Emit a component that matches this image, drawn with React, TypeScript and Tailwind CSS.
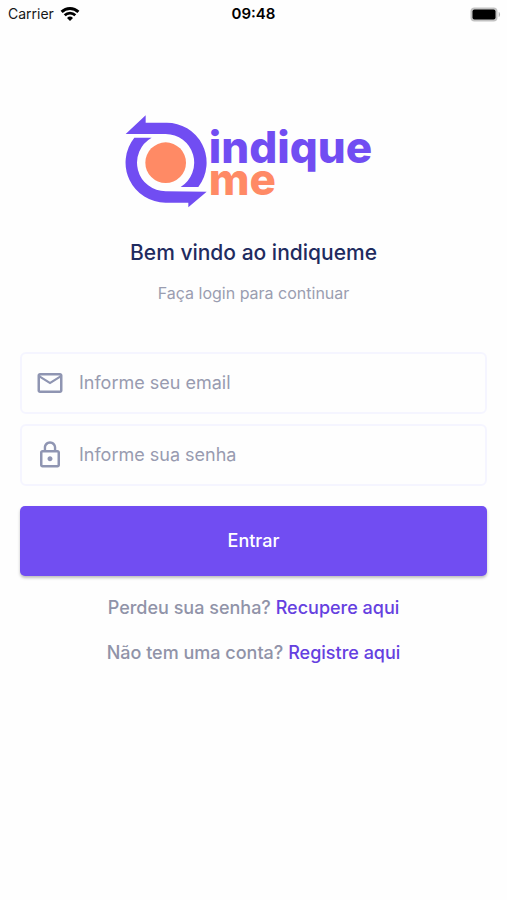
import React from 'react'
import type {IconType} from 'react-icons'
import {MdLockOutline, MdMailOutline} from 'react-icons/md'

interface FieldProps {
  id: string
  type: string
  label: string
  icon: IconType
}

function StatusBar() {
  return (
    <header className="grid h-7 grid-cols-3 items-center px-2 text-sm text-neutral-900">
      <div className="flex items-center gap-1.5">
        <span>Carrier</span>
        <svg viewBox="0 0 20 15" className="h-4 w-5" fill="none" stroke="#000">
          <path d="M1.6 5.4a12 12 0 0 1 16.8 0" strokeWidth="2.9" />
          <path d="M4.7 8.8a7.6 7.6 0 0 1 10.6 0" strokeWidth="2.7" />
          <path d="M10 14.6 7 11.5a4.4 4.4 0 0 1 6 0z" fill="#000" stroke="none" />
        </svg>
      </div>
      <span className="text-center text-[15px] font-semibold text-black">
        09:48
      </span>
      <svg viewBox="0 0 31 15" className="-mr-0.5 h-[15px] w-[31px] justify-self-end">
        <rect x="0.5" y="0.5" width="27" height="14" rx="4" fill="#c2c2c2" />
        <rect x="2.5" y="2.5" width="23" height="10" rx="2" fill="#000" />
        <path d="M28.7 5c1.8.6 1.8 4.4 0 5z" fill="#b5b5b5" />
      </svg>
    </header>
  )
}

function Logo() {
  return (
    <div className="flex items-start justify-center gap-0.5 pr-2.5">
      <svg viewBox="45 45 246 279" className="h-[93px] w-[82px]">
        <path
          d="M47 102 107 46V68H167A120 120 0 0 1 265 261H212A86 86 0 0 0 167 102Z"
          fill="#714df2"
        />
        <path
          d="M290 275 235 322V308H167A120 120 0 0 1 73 113H125A86 86 0 0 0 167 274Z"
          fill="#714df2"
        />
        <circle cx="167" cy="188" r="61" fill="#ff8a65" />
      </svg>
      <div className="pt-4 text-left text-[44px] leading-8 font-extrabold">
        <div className="text-[#714df2]">indique</div>
        <div className="text-[#ff8a65]">me</div>
      </div>
    </div>
  )
}

function Field({id, type, label, icon: Icon}: FieldProps) {
  return (
    <div className="flex h-[62px] items-center gap-3.5 rounded-md border-2 border-[#f5f5ff] px-[13px]">
      <label htmlFor={id} aria-label={label}>
        <Icon size={30} color="#8f95b2" />
      </label>
      <input
        id={id}
        type={type}
        placeholder={label}
        className="min-w-0 flex-1 text-lg leading-6 text-gray-800 outline-none placeholder:text-[#989bb0]"
      />
    </div>
  )
}

export default function App() {
  return (
    <div className="min-h-screen bg-[#fefefe] font-['Inter',sans-serif]">
      <StatusBar />

      <main className="px-5 pt-[87px] pb-8 text-center">
        <Logo />
        <h1 className="mt-[33px] text-[21px] leading-6 font-medium text-[#1f2b5f]">
          Bem vindo ao indiqueme
        </h1>
        <p className="mt-4 text-base leading-6 text-[#9a9db0]">
          Faça login para continuar
        </p>

        <form
          className="mt-[47px] flex flex-col gap-2.5"
          onSubmit={(e) => e.preventDefault()}
        >
          <Field
            id="email"
            type="email"
            label="Informe seu email"
            icon={MdMailOutline}
          />
          <Field
            id="senha"
            type="password"
            label="Informe sua senha"
            icon={MdLockOutline}
          />
          <button
            type="submit"
            className="mt-2.5 h-[70px] rounded-[5px] bg-[#714df2] text-lg font-medium text-white shadow-[0_2px_3px_rgba(0,0,0,0.25)]"
          >
            Entrar
          </button>
        </form>

        <div className="mt-5 flex flex-col gap-[21px] text-lg leading-6 font-medium text-[#9093a8]">
          <p>
            Perdeu sua senha?{' '}
            <a href="#recuperar" className="text-[#6540e0]">
              Recupere aqui
            </a>
          </p>
          <p>
            Não tem uma conta?{' '}
            <a href="#registrar" className="text-[#6540e0]">
              Registre aqui
            </a>
          </p>
        </div>
      </main>
    </div>
  )
}
